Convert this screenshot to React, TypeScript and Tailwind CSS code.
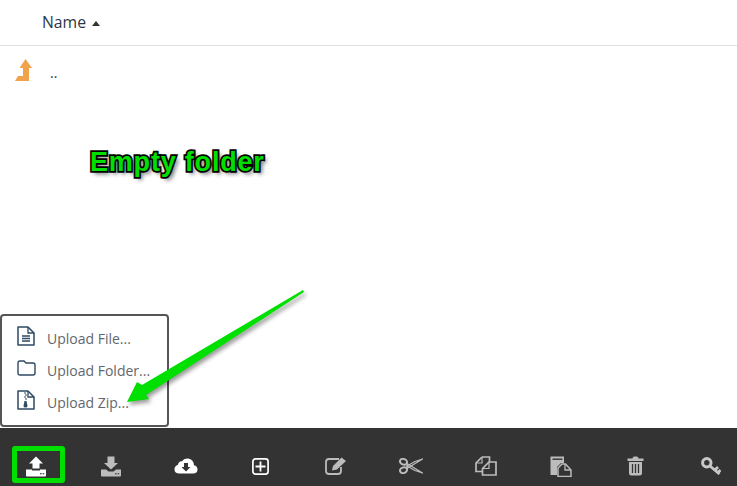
import React from "react";

const I = ({ w = 22, h = 22, vb = "0 0 22 22", children }: { w?: number; h?: number; vb?: string; children: React.ReactNode }) => (
  <svg width={w} height={h} viewBox={vb} className="block">{children}</svg>
);

const G = "#bcbcbc";

const tools: { label: string; icon: React.ReactNode }[] = [
  {
    label: "upload",
    icon: (
      <I w={22} h={21} vb="0 0 22 21">
        <path d="M11 0.5 L18 7.5 H14.5 V12.5 H7.5 V7.5 H4 Z" fill="#fff" />
        <path d="M1 13.5 H7 V14.5 H15 V13.5 H21 V19.5 Q21 20.5 20 20.5 H2 Q1 20.5 1 19.5 Z" fill="#fff" />
        <rect x="15" y="17" width="1.6" height="1.4" fill="#555" />
        <rect x="17.6" y="17" width="1.6" height="1.4" fill="#555" />
      </I>
    ),
  },
  {
    label: "download",
    icon: (
      <I w={22} h={21} vb="0 0 22 21">
        <path d="M7.5 0.5 H14.5 V7 H18 L11 13.5 L4 7 H7.5 Z" fill={G} />
        <path d="M1 13.5 H6 L8.5 15.5 H13.5 L16 13.5 H21 V19.5 Q21 20.5 20 20.5 H2 Q1 20.5 1 19.5 Z" fill={G} />
        <rect x="15" y="17" width="1.6" height="1.4" fill="#555" />
        <rect x="17.6" y="17" width="1.6" height="1.4" fill="#555" />
      </I>
    ),
  },
  {
    label: "cloud",
    icon: (
      <I w={24} h={16} vb="0 0 24 16">
        <path d="M5.5 15.5 H19 Q23.5 15.5 23.5 11.5 Q23.5 8 20 7.2 Q19.8 1.5 14 0.5 Q10 0 8 3.3 Q4.5 3 4 6.8 Q0.5 7.8 0.5 11.5 Q0.5 15.5 5.5 15.5 Z" fill="#fff" />
        <path d="M10 5 H14 V9 H16.5 L12 13.5 L7.5 9 H10 Z" fill="#333" />
      </I>
    ),
  },
  {
    label: "new",
    icon: (
      <I w={17} h={17} vb="0 0 17 17">
        <rect x="0.9" y="0.9" width="15.2" height="15.2" rx="2.6" fill="none" stroke="#fff" strokeWidth="1.7" />
        <path d="M8.5 3.5 V13.5 M3.5 8.5 H13.5" stroke="#fff" strokeWidth="1.8" fill="none" />
      </I>
    ),
  },
  {
    label: "rename",
    icon: (
      <I w={22} h={18} vb="0 0 22 18">
        <path d="M16 10 V14 Q16 17 13 17 H4 Q1 17 1 14 V5 Q1 2 4 2 H14" fill="none" stroke={G} strokeWidth="1.8" />
        <path d="M7 13.5 L8 9 L16.5 0.5 L21 4 L12 12.5 Z" fill={G} />
      </I>
    ),
  },
  {
    label: "cut",
    icon: (
      <I w={24} h={16} vb="0 0 24 16">
        <ellipse cx="4.5" cy="3.8" rx="3.6" ry="2.8" fill="none" stroke={G} strokeWidth="2" transform="rotate(20 4.5 3.8)" />
        <ellipse cx="4.5" cy="12.2" rx="3.6" ry="2.8" fill="none" stroke={G} strokeWidth="2" transform="rotate(-20 4.5 12.2)" />
        <path d="M8 5.5 L23.5 15 L16 12.5 L8 8 Z" fill="none" stroke={G} strokeWidth="1.3" strokeLinejoin="round" />
        <path d="M8 10.5 L23.5 1 L16 3.5 L8 8 Z" fill="none" stroke={G} strokeWidth="1.3" strokeLinejoin="round" />
      </I>
    ),
  },
  {
    label: "copy",
    icon: (
      <I w={22} h={20} vb="0 0 22 20">
        <path d="M7 1 H14.5 V6 M7 1 L1 7 V15.5 H7" fill="none" stroke={G} strokeWidth="1.7" />
        <path d="M7 1 V7 H1" fill="none" stroke={G} strokeWidth="1.2" />
        <path d="M14 6 H21 V19 H7.5 V12.5 Z" fill="#333" stroke={G} strokeWidth="1.7" />
        <path d="M14 6 V12.5 H7.5" fill="none" stroke={G} strokeWidth="1.2" />
      </I>
    ),
  },
  {
    label: "paste",
    icon: (
      <I w={22} h={21} vb="0 0 22 21">
        <path d="M0.5 0.5 H14 V7 H11 L7 11 V19 H0.5 Z" fill={G} />
        <rect x="2.5" y="2.5" width="10" height="1.4" fill="#333" />
        <path d="M12 8 H15.5 L21 14 V20.5 H8 V12 Z" fill="#333" stroke={G} strokeWidth="1.5" />
        <path d="M15 8 V14 H21" fill="none" stroke={G} strokeWidth="1.3" />
      </I>
    ),
  },
  {
    label: "delete",
    icon: (
      <I w={17} h={20} vb="0 0 17 20">
        <path d="M5.5 2.5 Q5.5 0.5 7.5 0.5 H9.5 Q11.5 0.5 11.5 2.5 H16.5 V5 H0.5 V2.5 Z" fill={G} />
        <path d="M2 6 H15 V17 Q15 19.5 12.5 19.5 H4.5 Q2 19.5 2 17 Z" fill={G} />
        <path d="M5.5 8 V17 M8.5 8 V17 M11.5 8 V17" stroke="#333" strokeWidth="1.3" />
      </I>
    ),
  },
  {
    label: "key",
    icon: (
      <I w={20} h={18} vb="0 0 20 18">
        <ellipse cx="5.8" cy="5.8" rx="4.2" ry="4.2" fill="none" stroke="#c8c8c8" strokeWidth="3" />
        <path d="M9 9 L18.5 17 M14 13 L17 10 M17 15.5 L19.5 13" stroke="#c8c8c8" strokeWidth="2.8" fill="none" />
      </I>
    ),
  },
];

const Ink = "#2f4a63";

const FileIcon = () => (
  <I w={18} h={20} vb="0 0 18 20">
    <path d="M1 1 H11 L17 7 V19 H1 Z" fill="#fff" stroke={Ink} strokeWidth="1.5" strokeLinejoin="round" />
    <path d="M11 1 V7 H17" fill="none" stroke={Ink} strokeWidth="1.3" />
    <path d="M5 10 H13 M5 12.5 H13 M5 15 H13" stroke={Ink} strokeWidth="1.4" />
  </I>
);
const FolderIcon = () => (
  <I w={19} h={16} vb="0 0 19 16">
    <path d="M1 3 Q1 1 3 1 H7 L9 3 H16 Q18 3 18 5 V13 Q18 15 16 15 H3 Q1 15 1 13 Z" fill="#fff" stroke={Ink} strokeWidth="1.4" />
  </I>
);
const ZipIcon = () => (
  <I w={18} h={20} vb="0 0 18 20">
    <path d="M1 1 H11 L17 7 V19 H1 Z" fill="#fff" stroke={Ink} strokeWidth="1.5" strokeLinejoin="round" />
    <path d="M11 1 V7 H17" fill="none" stroke={Ink} strokeWidth="1.3" />
    <path d="M7 3 H9 M8 5 H10 M7 7 H9 M8 9 H10" stroke={Ink} strokeWidth="1.1" />
    <path d="M7.5 11 H9.5 L10.5 16 Q10.5 17.5 8.5 17.5 Q6.5 17.5 6.5 16 Z" fill={Ink} />
  </I>
);

const menu = [
  { label: "Upload File...", icon: <FileIcon /> },
  { label: "Upload Folder...", icon: <FolderIcon /> },
  { label: "Upload Zip...", icon: <ZipIcon /> },
];

export default function App() {
  return (
    <div className="relative flex h-[486px] w-[737px] flex-col overflow-hidden bg-white font-['Open_Sans',sans-serif]">
      <div className="flex h-[46px] shrink-0 items-center gap-[6px] border-b border-[#e0e0e0] pl-[42px] pt-[1px]">
        <span className="text-[15.75px] font-medium text-[#2b3648]">Name</span>
        <span className="h-0 w-0 border-x-[4.5px] border-b-[5px] border-x-transparent border-b-[#333]" />
      </div>

      <div className="flex flex-1 items-start gap-[17px] pl-[15px] pt-[13px]">
        <svg width="18" height="23" viewBox="0 0 18 23" className="block">
          <path d="M0 22 H14 V9 H17 L10.5 0 L4.5 9 H8 V17 H3 Z" fill="#f2a24b" />
        </svg>
        <span className="mt-[4px] text-[14px] leading-[20px] text-[#333]">..</span>
      </div>

      <div className="flex h-[58px] shrink-0 items-center overflow-hidden bg-[#333] pt-[18px]">
        <div className="ml-[-2px] flex">
          {tools.map((t) => (
            <div key={t.label} className="flex w-[75px] shrink-0 items-center justify-center">
              {t.icon}
            </div>
          ))}
        </div>
      </div>

      <div className="absolute left-[0px] top-[314px] flex h-[113px] w-[169px] flex-col justify-center gap-[6px] rounded-[4px] border-2 border-[#555] bg-white pl-[15px]">
        {menu.map((m) => (
          <div key={m.label} className="flex h-[26px] items-center">
            <div className="mb-[5px] flex w-[30px] shrink-0">{m.icon}</div>
            <span className="text-[14px] whitespace-nowrap text-[#62676c]">{m.label}</span>
          </div>
        ))}
      </div>

      <div className="absolute left-[12px] top-[446px] h-[37px] w-[53px] rounded-[3px] border-[5px] border-[#00e000]" />

      <div className="absolute left-[90px] top-[147px] font-['Liberation_Sans',sans-serif] text-[27px] leading-[30px] font-bold tracking-[0.8px] whitespace-nowrap text-[#00e000] [-webkit-text-stroke:3.5px_#000] [paint-order:stroke_fill] [text-shadow:3px_3px_4px_rgba(0,0,0,0.6)]">
        Empty folder
      </div>

      <svg width="737" height="486" viewBox="0 0 737 486" className="pointer-events-none absolute left-0 top-0 [filter:drop-shadow(2px_3px_2px_rgba(0,0,0,0.4))]">
        <path d="M303 290 L304 292 L146 395 L149 399 L127 402 L137 382 L142 385 Z" fill="#00e000" />
      </svg>
    </div>
  );
}
